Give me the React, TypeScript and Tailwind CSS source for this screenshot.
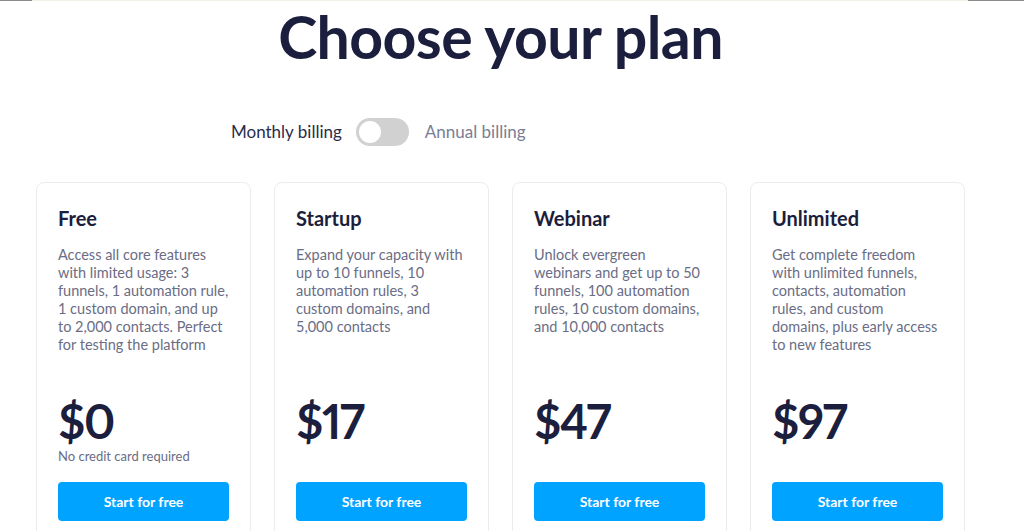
import { useState } from 'react'

// ---------------------------------------------------------------------------
// Data
// ---------------------------------------------------------------------------

const PLANS = [
  {
    name: 'Free',
    lines: [
      'Access all core features',
      'with limited usage: 3',
      'funnels, 1 automation rule,',
      '1 custom domain, and up',
      'to 2,000 contacts. Perfect',
      'for testing the platform',
    ],
    price: '$0',
    note: 'No credit card required',
  },
  {
    name: 'Startup',
    lines: ['Expand your capacity with', 'up to 10 funnels, 10', 'automation rules, 3', 'custom domains, and', '5,000 contacts'],
    price: '$17',
    note: '',
  },
  {
    name: 'Webinar',
    lines: [
      'Unlock evergreen',
      'webinars and get up to 50',
      'funnels, 100 automation',
      'rules, 10 custom domains,',
      'and 10,000 contacts',
    ],
    price: '$47',
    note: '',
  },
  {
    name: 'Unlimited',
    lines: [
      'Get complete freedom',
      'with unlimited funnels,',
      'contacts, automation',
      'rules, and custom',
      'domains, plus early access',
      'to new features',
    ],
    price: '$97',
    note: '',
  },
]

const FONT = "font-['Lato','Inter',sans-serif]"

// ---------------------------------------------------------------------------
// Card
// ---------------------------------------------------------------------------

function PlanCard({ plan }: { plan: (typeof PLANS)[number] }) {
  return (
    <div className="w-[215px] h-[360px] shrink-0 rounded-lg border border-[#ececec] bg-white pt-[21px] px-[21px] flex flex-col">
      <h3 className="text-[20px] leading-[28px] font-bold text-[#1b1e3d]">{plan.name}</h3>
      <div className="mt-[14px] h-[149px] text-[14.5px] leading-[18px] text-[#6a6d85]">
        {plan.lines.map(l => (
          <div key={l} className="whitespace-nowrap">{l}</div>
        ))}
      </div>
      <div className="text-[47px] leading-[52px] font-bold text-[#1b1e3d] tracking-[-1.5px] proportional-nums">
        {plan.price}
      </div>
      <div className="h-[18px] text-[13px] leading-[18px] text-[#6a6d85]">{plan.note}</div>
      <button className="mt-[17px] h-[39px] w-[171px] rounded bg-[#00a3ff] text-white text-[14px] font-bold">
        Start for free
      </button>
    </div>
  )
}

// ---------------------------------------------------------------------------
// Page
// ---------------------------------------------------------------------------

export default function App() {
  const [annual, setAnnual] = useState(false)

  return (
    <div className={`w-[1024px] h-[531px] overflow-hidden bg-white ${FONT}`}>
      {/* top strip */}
      <div className="flex h-px">
        <div className="w-8 bg-[#8a8a8a]" />
        <div className="flex-1 bg-[#f5f2e6]" />
        <div className="w-14 bg-[#8a8a8a]" />
      </div>

      <h1 className="mt-[1px] text-center w-[1001px] text-[59px] leading-[70px] font-bold text-[#1b1e3d] tracking-[-0.6px]">
        Choose your plan
      </h1>

      {/* billing toggle */}
      <div className="mt-[45px] ml-[231px] flex items-center h-[30px]">
        <span className="text-[17px] text-[#2a2d4a]">Monthly billing</span>
        <button
          onClick={() => setAnnual(a => !a)}
          className="ml-[14px] w-[53px] h-[28px] rounded-full bg-[#d1d1d1] p-[3px] flex"
        >
          <span className={`w-[22px] h-[22px] rounded-full bg-white ${annual ? 'ml-auto' : ''}`} />
        </button>
        <span className="ml-[16px] text-[17px] text-[#7a7d94]">Annual billing</span>
      </div>

      {/* cards */}
      <div className="mt-[35px] ml-[36px] flex gap-[23px]">
        {PLANS.map(p => (
          <PlanCard key={p.name} plan={p} />
        ))}
      </div>
    </div>
  )
}
